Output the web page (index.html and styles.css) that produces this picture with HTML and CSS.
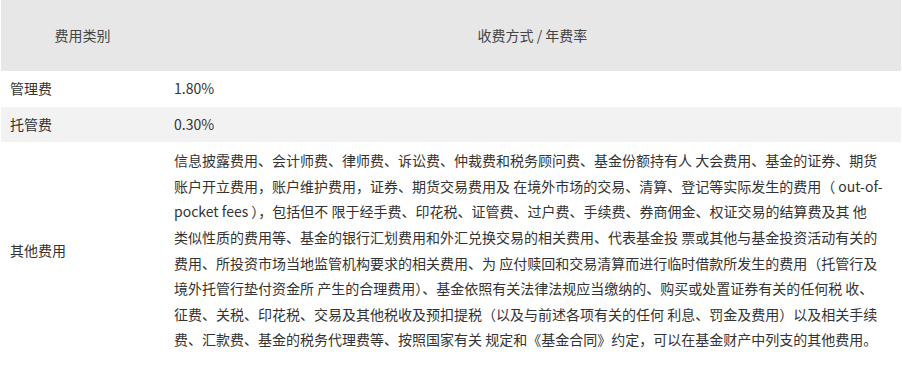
FILE: index.html
```html
<!DOCTYPE html>
<html lang="zh-CN">
<head>
<meta charset="utf-8">
<title>费用</title>
<link rel="stylesheet" href="styles.css">
</head>
<body>
<div class="wrap">
<table class="fees">
  <colgroup><col class="c1"><col class="c2"></colgroup>
  <thead>
    <tr><th>费用类别</th><th>收费方式 / 年费率</th></tr>
  </thead>
  <tbody>
    <tr><td>管理费</td><td>1.80%</td></tr>
    <tr class="alt"><td>托管费</td><td>0.30%</td></tr>
    <tr><td>其他费用</td><td class="long">信息披露费用、会计师费、律师费、诉讼费、仲裁费和税务顾问费、基金份额持有人 大会费用、基金的证券、期货<br>账户开立费用，账户维护费用，证券、期货交易费用及 在境外市场的交易、清算、登记等实际发生的费用（ out-of-<br>pocket fees ），包括但不 限于经手费、印花税、证管费、过户费、手续费、券商佣金、权证交易的结算费及其 他<br>类似性质的费用等、基金的银行汇划费用和外汇兑换交易的相关费用、代表基金投 票或其他与基金投资活动有关的<br>费用、所投资市场当地监管机构要求的相关费用、为 应付赎回和交易清算而进行临时借款所发生的费用（托管行及<br>境外托管行垫付资金所 产生的合理费用）、基金依照有关法律法规应当缴纳的、购买或处置证券有关的任何税 收、<br>征费、关税、印花税、交易及其他税收及预扣提税（以及与前述各项有关的任何 利息、罚金及费用）以及相关手续<br>费、汇款费、基金的税务代理费等、按照国家有关 规定和《基金合同》约定，可以在基金财产中列支的其他费用。</td></tr>
  </tbody>
</table>
</div>
</body>
</html>
```
FILE: styles.css
```css
html, body {
  margin: 0;
  padding: 0;
  background: #fff;
}
.wrap {
  padding: 0 1px;
}
.fees {
  width: 900px;
  border-collapse: collapse;
  table-layout: fixed;
  font-family: "Noto Sans CJK SC", "Noto Sans", sans-serif;
  font-size: 14px;
  line-height: 25.6px;
  color: #333;
}
.c1 { width: 163px; }
.fees th {
  background: #e7e7e7;
  font-weight: normal;
  color: #444;
  text-align: center;
  height: 71px;
  padding: 0;
  box-sizing: border-box;
  vertical-align: middle;
}
.fees td {
  padding: 5px 0 5px 9px;
  vertical-align: middle;
  white-space: nowrap;
}
.fees td + td {
  padding-left: 10px;
}
.fees tr.alt td {
  background: #f2f2f2;
}
.fees td.long {
  padding-top: 6px;
  padding-bottom: 6px;
}
```
